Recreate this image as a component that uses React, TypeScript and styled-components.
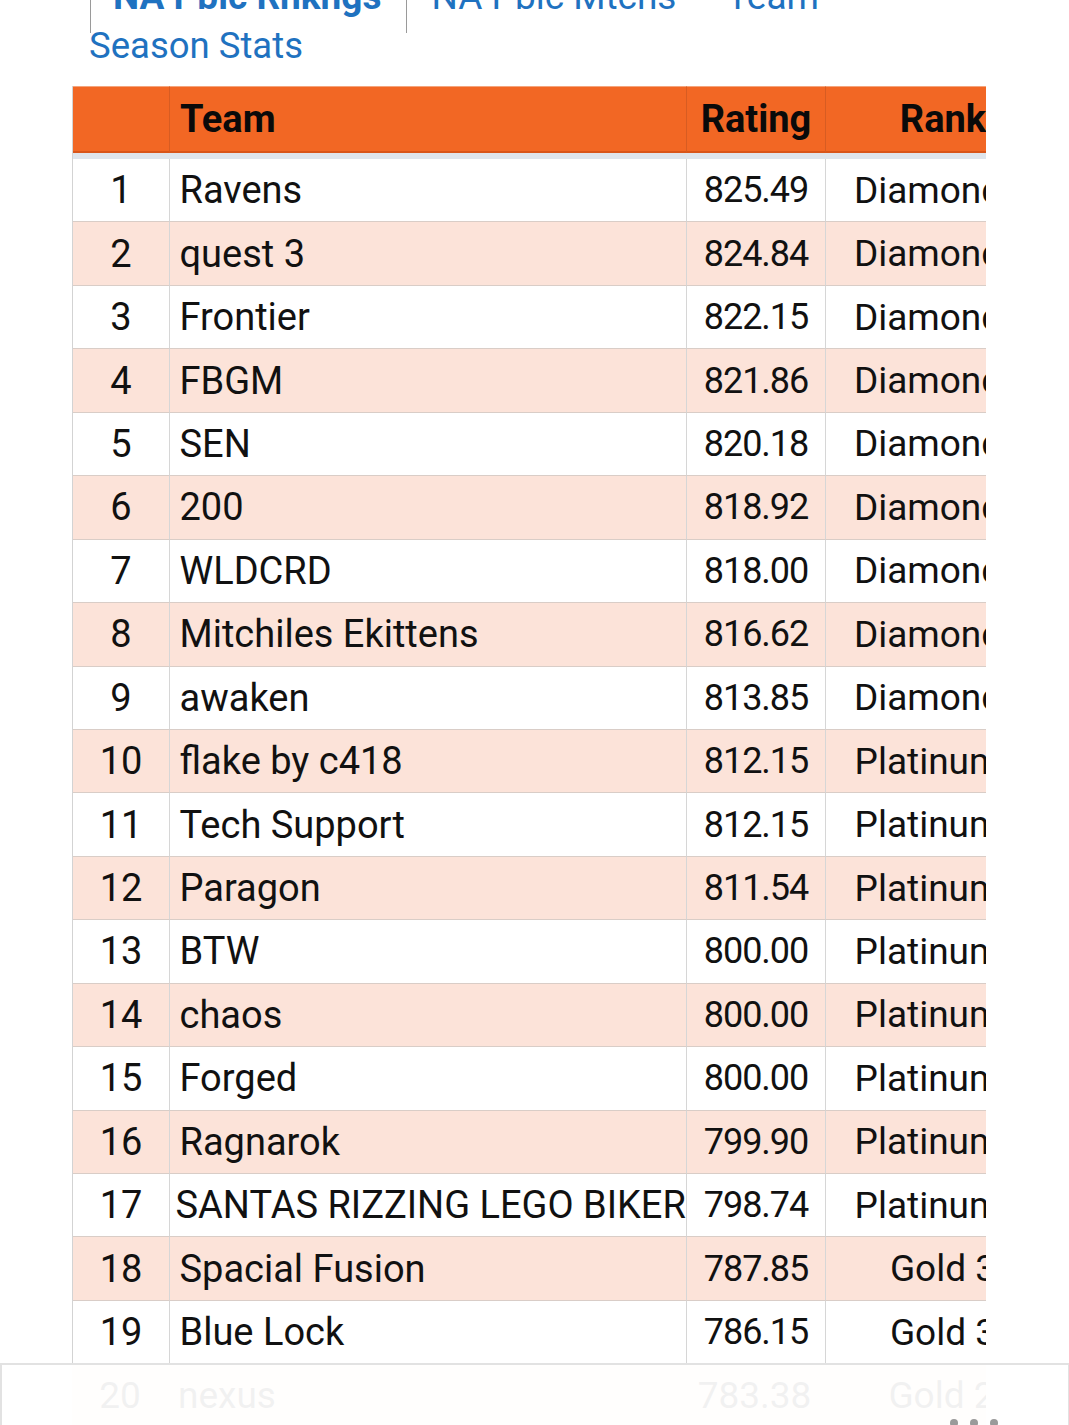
import React from "react";
import styled, { createGlobalStyle } from "styled-components";

const Global = createGlobalStyle`
  html, body { margin: 0; padding: 0; background: #ffffff; }
  body { font-family: Roboto, "Noto Sans", "Liberation Sans", sans-serif; overflow: hidden; height: 1425px; }
`;

const Page = styled.div`
  position: relative;
  width: 1069px;
  height: 1425px;
  overflow: hidden;
`;

const TabRow = styled.nav`
  display: flex;
  margin: -24px 0 0 90px;
  height: 57px;
`;

const Tab = styled.a<{ $active?: boolean; $sep?: boolean }>`
  display: block;
  font-size: 37px;
  line-height: 42px;
  color: #1f72c0;
  font-weight: ${(p) => (p.$active ? 700 : 400)};
  padding: 0 ${(p) => (p.$sep ? "24px" : "0")} 0 ${(p) => (p.$active ? "22px" : "25px")};
  border-left: ${(p) => (p.$sep ? "1.5px solid #9a9a9a" : "1.5px solid transparent")};
  text-decoration: none;
  white-space: nowrap;
`;

const SubLink = styled.a`
  display: block;
  margin: -7px 0 0 89px;
  font-size: 36.5px;
  line-height: 40px;
  color: #1f72c0;
  text-decoration: none;
`;

const TableWrap = styled.div`
  margin: 20px 0 0 72px;
  width: 914px;
  overflow: hidden;
`;

const Table = styled.table`
  border-collapse: separate;
  border-spacing: 0;
  width: 987px;
  table-layout: fixed;
  color: #111;
  border-left: 1.5px solid #d3d3d3;
`;

const HeadCell = styled.th<{ $align?: string }>`
  background: #f26724;
  height: 64px;
  padding: 0 ${(p) => (p.$align === "left" ? "10px" : "0")};
  text-align: ${(p) => p.$align || "center"};
  font-weight: 700;
  font-size: 38px;
  color: #0a0a0a;
  border-top: 1.5px solid #f4a47c;
  border-bottom: 2px solid #d9561a;
  border-left: 1px solid #d75c22;
  white-space: nowrap;
  &:first-child { border-left: none; }
`;

const Strip = styled.tr`
  td {
    height: 6px;
    padding: 0;
    background: #dfe5ec;
    border: none;
  }
`;

const Row = styled.tr<{ $alt: boolean }>`
  background: ${(p) => (p.$alt ? "#fce3d9" : "#ffffff")};
`;

const Cell = styled.td<{ $kind: "num" | "team" | "rating" | "rank"; $indent?: number }>`
  height: 62.45px;
  padding: 0 ${(p) => (p.$kind === "team" ? "9.5px" : "0")};
  text-indent: ${(p) => p.$indent || 0}px;
  text-align: ${(p) => (p.$kind === "team" ? "left" : "center")};
  font-size: ${(p) => (p.$kind === "rating" ? "36px" : p.$kind === "rank" ? "37px" : "38px")};
  letter-spacing: ${(p) => (p.$kind === "rating" ? "-1px" : "0")};
  border-left: 1.5px solid #d6d6d6;
  border-bottom: 1px solid #d9cdc7;
  white-space: nowrap;
  overflow: hidden;
  text-overflow: clip;
  &:first-child { border-left: none; }
`;

const Overlay = styled.div`
  position: absolute;
  left: 0;
  top: 1363px;
  width: 1066px;
  height: 80px;
  background: rgba(255, 255, 255, 0.94);
  border: 2px solid #e2e2e2;
  border-bottom: none;
`;

const Ghost = styled.div`
  position: absolute;
  left: 72px;
  top: 1364px;
  width: 914px;
  height: 62px;
  overflow: hidden;
  background: #fce3d9;
  display: grid;
  grid-template-columns: 96px 517px 139px 235px;
  align-items: center;
  font-size: 37px;
  color: #111;
`;

const GhostCell = styled.div<{ $align?: string }>`
  text-align: ${(p) => p.$align || "center"};
  padding-left: ${(p) => (p.$align === "left" ? "10px" : "0")};
  white-space: nowrap;
`;

const Dots = styled.div`
  position: absolute;
  left: 950px;
  top: 1419px;
  display: flex;
  gap: 12px;
  span {
    width: 8px;
    height: 8px;
    border-radius: 50%;
    background: #9a9a9a;
  }
`;

const rows: [number, string, string, string][] = [
  [1, "Ravens", "825.49", "Diamond 1"],
  [2, "quest 3", "824.84", "Diamond 1"],
  [3, "Frontier", "822.15", "Diamond 1"],
  [4, "FBGM", "821.86", "Diamond 1"],
  [5, "SEN", "820.18", "Diamond 1"],
  [6, "200", "818.92", "Diamond 1"],
  [7, "WLDCRD", "818.00", "Diamond 1"],
  [8, "Mitchiles Ekittens", "816.62", "Diamond 1"],
  [9, "awaken", "813.85", "Diamond 1"],
  [10, "flake by c418", "812.15", "Platinum 1"],
  [11, "Tech Support", "812.15", "Platinum 1"],
  [12, "Paragon", "811.54", "Platinum 1"],
  [13, "BTW", "800.00", "Platinum 1"],
  [14, "chaos", "800.00", "Platinum 1"],
  [15, "Forged", "800.00", "Platinum 1"],
  [16, "Ragnarok", "799.90", "Platinum 1"],
  [17, "SANTAS RIZZING LEGO BIKERS", "798.74", "Platinum 1"],
  [18, "Spacial Fusion", "787.85", "Gold 3"],
  [19, "Blue Lock", "786.15", "Gold 3"],
];

export default function App() {
  return (
    <Page>
      <Global />
      <TabRow>
        <Tab $active $sep>NA Pblc Rnkngs</Tab>
        <Tab $sep>NA Pblc Mtchs</Tab>
        <Tab>Team</Tab>
      </TabRow>
      <SubLink>Season Stats</SubLink>
      <TableWrap>
        <Table>
          <colgroup>
            <col style={{ width: 96 }} />
            <col style={{ width: 517 }} />
            <col style={{ width: 139 }} />
            <col style={{ width: 235 }} />
          </colgroup>
          <thead>
            <tr>
              <HeadCell></HeadCell>
              <HeadCell $align="left">Team</HeadCell>
              <HeadCell>Rating</HeadCell>
              <HeadCell>Rank</HeadCell>
            </tr>
          </thead>
          <tbody>
            <Strip>
              <td colSpan={4}></td>
            </Strip>
            {rows.map(([n, team, rating, rank], i) => (
              <Row key={n} $alt={i % 2 === 1}>
                <Cell $kind="num">{n}</Cell>
                <Cell $kind="team" $indent={n === 17 ? -4 : 0}>{team}</Cell>
                <Cell $kind="rating">{rating}</Cell>
                <Cell $kind="rank">{rank}</Cell>
              </Row>
            ))}
          </tbody>
        </Table>
      </TableWrap>
      <Ghost>
        <GhostCell>20</GhostCell>
        <GhostCell $align="left">nexus</GhostCell>
        <GhostCell>783.38</GhostCell>
        <GhostCell>Gold 2</GhostCell>
      </Ghost>
      <Overlay />
      <Dots>
        <span />
        <span />
        <span />
      </Dots>
    </Page>
  );
}
